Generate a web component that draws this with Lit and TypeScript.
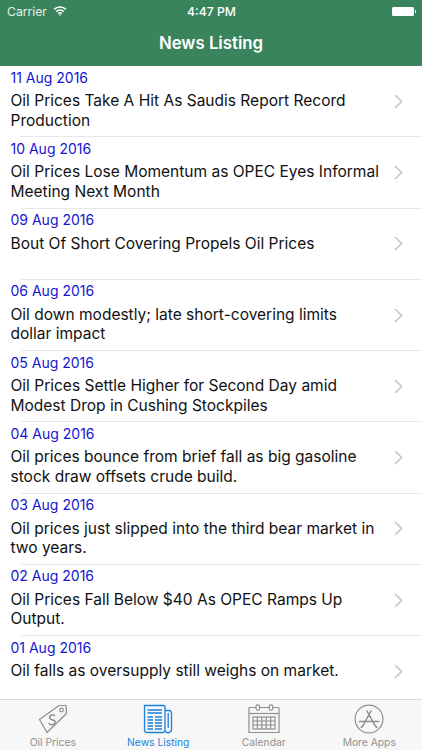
import { LitElement, html, css, svg } from "lit";
import { customElement } from "lit/decorators.js";

const rows = [
  ["11 Aug 2016", "Oil Prices Take A Hit As Saudis Report Record Production"],
  ["10 Aug 2016", "Oil Prices Lose Momentum as OPEC Eyes Informal Meeting Next Month"],
  ["09 Aug 2016", "Bout Of Short Covering Propels Oil Prices"],
  ["06 Aug 2016", "Oil down modestly; late short-covering limits dollar impact"],
  ["05 Aug 2016", "Oil Prices Settle Higher for Second Day amid Modest Drop in Cushing Stockpiles"],
  ["04 Aug 2016", "Oil prices bounce from brief fall as big gasoline stock draw offsets crude build."],
  ["03 Aug 2016", "Oil prices just slipped into the third bear market in two years."],
  ["02 Aug 2016", "Oil Prices Fall Below $40 As OPEC Ramps Up Output."],
  ["01 Aug 2016", "Oil falls as oversupply still weighs on market."],
];

const tagIcon = svg`<svg width="30" height="30" viewBox="0 0 30 30" fill="none" stroke="#8e8e8e" stroke-width="1.2">
  <path d="M1.5 15.5 L21 1.5 L28 1.5 L28.5 9.5 L9 28.5 Z" stroke-linejoin="round"/>
  <circle cx="23.5" cy="6" r="1.8"/>
  <path d="M16.5 11.5 C14 9.5 10.5 12 12 14.5 C13.5 16.5 16.5 15.5 17 17.5 C17.5 20 13.5 22 11 19.5" stroke-linecap="round" stroke-width="1.5"/>
</svg>`;

const newsIcon = svg`<svg width="30" height="30" viewBox="0 0 30 30" fill="none" stroke="#1b7fe0" stroke-width="1.3">
  <path d="M22 3 V26 A2.5 2.5 0 0 1 19.5 28.5 H4 A2.5 2.5 0 0 1 1.5 26 V1.5 H20.5 A1.5 1.5 0 0 1 22 3 Z" stroke-linejoin="round"/>
  <path d="M22 6.5 H26 A2.5 2.5 0 0 1 28.5 9 V25 A3.5 3.5 0 0 1 22 27" />
  <path d="M25.2 9 V24" />
  <path d="M4.5 6 H19 M4.5 9 H19" stroke-width="1.4"/>
  <path d="M4.5 13 H10 M4.5 16 H10 M4.5 19 H10 M4.5 22 H10 M4.5 25 H10 M12 13 H19 M12 16 H19 M12 19 H19 M12 22 H19 M12 25 H19" stroke-width="1.7"/>
</svg>`;

const calIcon = svg`<svg width="32" height="30" viewBox="0 0 32 30" fill="none" stroke="#8e8e8e" stroke-width="1.2">
  <path d="M8 3.5 H2 A1 1 0 0 0 1 4.5 V28.5 H31 V4.5 A1 1 0 0 0 30 3.5 H25 M12 3.5 H21"/>
  <rect x="8" y="0.8" width="3.6" height="5.6" rx="1.8"/>
  <rect x="21.2" y="0.8" width="3.6" height="5.6" rx="1.8"/>
  <path d="M1 9.5 H31"/>
  <rect x="5" y="13" width="22" height="12"/>
  <path d="M5 17 H27 M5 21 H27 M9.4 13 V25 M13.8 13 V25 M18.2 13 V25 M22.6 13 V25"/>
</svg>`;

const appsIcon = svg`<svg width="30" height="30" viewBox="0 0 30 30" fill="none" stroke="#8e8e8e" stroke-width="1.2">
  <circle cx="15" cy="15" r="13.9"/>
  <path d="M17 7 L9 21.5 M13 7 L21 21.5 M5.5 17.5 H24.5 M9 21.5 L7.3 23.5 M21 21.5 L22.7 23.5" stroke-width="1.5" stroke-linecap="round"/>
</svg>`;

const tabs = [
  { label: "Oil Prices", icon: tagIcon, active: false },
  { label: "News Listing", icon: newsIcon, active: true },
  { label: "Calendar", icon: calIcon, active: false },
  { label: "More Apps", icon: appsIcon, active: false },
];

@customElement("app-root")
export class AppRoot extends LitElement {
  static styles = css`
    :host {
      display: flex;
      flex-direction: column;
      width: 422px;
      height: 750px;
      overflow: hidden;
      background: #fff;
      font-family: "Inter", "Liberation Sans", sans-serif;
    }
    .header {
      background: #39845c;
      color: #fff;
      height: 66px;
      flex: none;
      display: flex;
      flex-direction: column;
    }
    .status {
      height: 22px;
      display: grid;
      grid-template-columns: 1fr auto 1fr;
      align-items: center;
      padding: 0 6px 0 7px;
      font-size: 12.2px;
    }
    .carrier {
      display: flex;
      align-items: center;
      gap: 6px;
      color: #e6f0ea;
    }
    .time {
      font-weight: 500;
    }
    .battery {
      justify-self: end;
      display: flex;
      align-items: center;
      gap: 1px;
    }
    .battery-body {
      width: 22px;
      height: 9px;
      background: #fff;
      border-radius: 1.5px;
    }
    .battery-tip {
      width: 1.5px;
      height: 3px;
      background: #e4eee8;
    }
    .title {
      flex: 1;
      display: flex;
      align-items: center;
      justify-content: center;
      font-size: 16.8px;
      font-weight: 600;
      padding-bottom: 2px;
    }
    .list {
      flex: 1;
      min-height: 0;
    }
    .row {
      height: 71.25px;
      box-sizing: border-box;
      position: relative;
      display: flex;
      align-items: flex-start;
      padding: 2.5px 19px 0 10.5px;
    }
    .row:not(:last-child)::after {
      content: "";
      position: absolute;
      left: 21px;
      right: 0;
      bottom: 0;
      height: 1px;
      background: #e8e8ea;
    }
    .text {
      flex: 1;
      min-width: 0;
      padding-right: 13px;
    }
    .date {
      font-size: 14px;
      line-height: 17px;
      color: #1414d2;
    }
    .headline {
      font-size: 15.52px;
      line-height: 19.5px;
      color: #111;
      margin-top: 5.5px;
    }
    .chev {
      flex: none;
      align-self: center;
      margin-top: -3px;
    }
    .tabbar {
      height: 51px;
      flex: none;
      display: grid;
      grid-template-columns: repeat(4, 1fr);
      background: #f7f7f7;
      border-top: 1px solid #d9d9db;
      box-sizing: border-box;
    }
    .tab {
      display: flex;
      flex-direction: column;
      align-items: center;
      padding-top: 4px;
      font-size: 10.3px;
      color: #929292;
    }
    .tab.active {
      color: #1b7fe0;
    }
    .tab svg {
      display: block;
      height: 30px;
    }
    .tab span {
      margin-top: 2px;
      line-height: 13px;
    }
  `;

  render() {
    return html`
      <div class="header">
        <div class="status">
          <div class="carrier">
            Carrier
            <svg width="14" height="10" viewBox="0 0 14 10" fill="none" stroke="#fff" stroke-width="1.5">
              <path d="M1 3.4 A8.5 8.5 0 0 1 13 3.4" />
              <path d="M3.2 5.6 A5.4 5.4 0 0 1 10.8 5.6" />
              <path d="M5.2 7.6 A2.6 2.6 0 0 1 8.8 7.6" />
              <circle cx="7" cy="9" r="0.8" fill="#fff" stroke="none" />
            </svg>
          </div>
          <div class="time">4:47 PM</div>
          <div class="battery"><div class="battery-body"></div><div class="battery-tip"></div></div>
        </div>
        <div class="title">News Listing</div>
      </div>
      <div class="list">
        ${rows.map(
          ([d, t]) => html`<div class="row">
            <div class="text">
              <div class="date">${d}</div>
              <div class="headline">${t}</div>
            </div>
            <svg class="chev" width="9" height="15" viewBox="0 0 9 15" fill="none" stroke="#c7c7cc" stroke-width="1.7">
              <path d="M1 1 L7.6 7.5 L1 14" />
            </svg>
          </div>`
        )}
      </div>
      <div class="tabbar">
        ${tabs.map(
          (t) => html`<div class="tab ${t.active ? "active" : ""}">${t.icon}<span>${t.label}</span></div>`
        )}
      </div>
    `;
  }
}
